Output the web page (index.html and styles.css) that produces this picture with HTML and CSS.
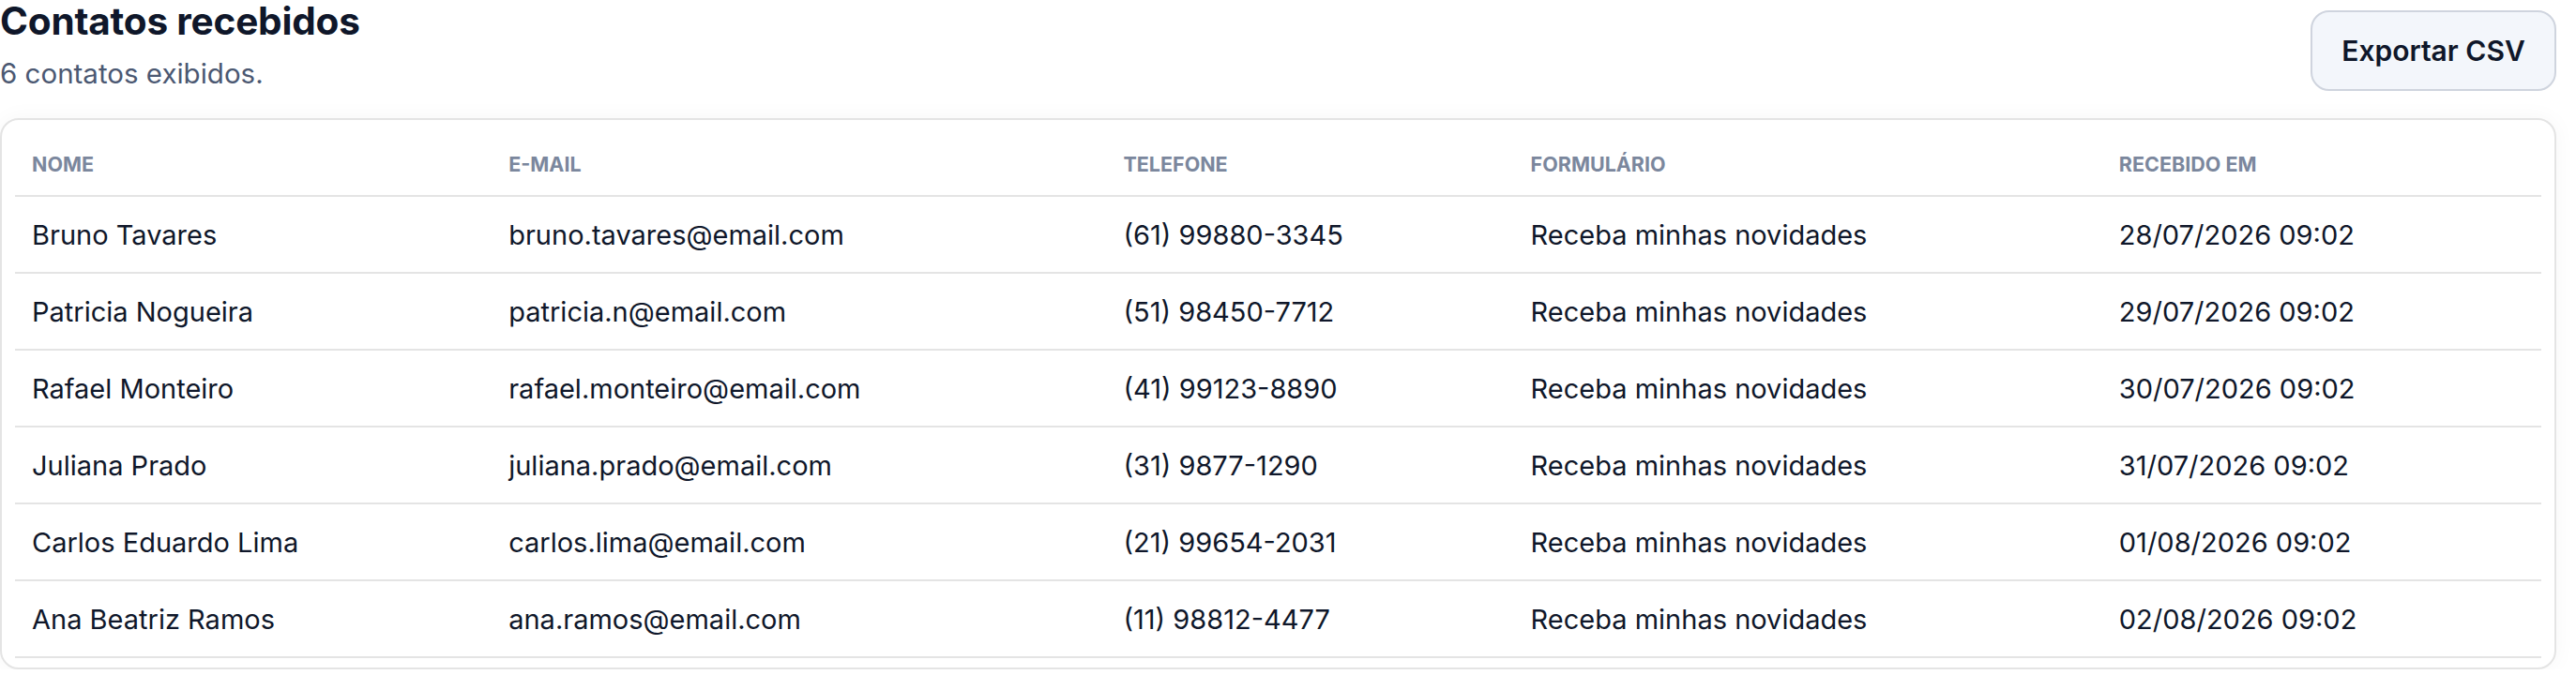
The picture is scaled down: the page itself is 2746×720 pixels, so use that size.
FILE: index.html
```html
<!DOCTYPE html>
<html lang="pt-BR">
<head>
<meta charset="utf-8">
<title>Contatos recebidos</title>
<link rel="stylesheet" href="styles.css">
</head>
<body>
<div class="page">
  <header class="page-header">
    <div class="heading">
      <h1 class="title">Contatos recebidos</h1>
      <p class="subtitle">6 contatos exibidos.</p>
    </div>
    <button class="btn-export" type="button">Exportar CSV</button>
  </header>

  <section class="card">
    <table class="contacts">
      <colgroup>
        <col class="col-name">
        <col class="col-email">
        <col class="col-phone">
        <col class="col-form">
        <col class="col-date">
      </colgroup>
      <thead>
        <tr>
          <th>Nome</th>
          <th>E-mail</th>
          <th>Telefone</th>
          <th>Formulário</th>
          <th>Recebido em</th>
        </tr>
      </thead>
      <tbody>
        <tr>
          <td>Bruno Tavares</td>
          <td>bruno.tavares@email.com</td>
          <td>(61) 99880-3345</td>
          <td>Receba minhas novidades</td>
          <td>28/07/2026 09:02</td>
        </tr>
        <tr>
          <td>Patricia Nogueira</td>
          <td>patricia.n@email.com</td>
          <td>(51) 98450-7712</td>
          <td>Receba minhas novidades</td>
          <td>29/07/2026 09:02</td>
        </tr>
        <tr>
          <td>Rafael Monteiro</td>
          <td>rafael.monteiro@email.com</td>
          <td>(41) 99123-8890</td>
          <td>Receba minhas novidades</td>
          <td>30/07/2026 09:02</td>
        </tr>
        <tr>
          <td>Juliana Prado</td>
          <td>juliana.prado@email.com</td>
          <td>(31) 9877-1290</td>
          <td>Receba minhas novidades</td>
          <td>31/07/2026 09:02</td>
        </tr>
        <tr>
          <td>Carlos Eduardo Lima</td>
          <td>carlos.lima@email.com</td>
          <td>(21) 99654-2031</td>
          <td>Receba minhas novidades</td>
          <td>01/08/2026 09:02</td>
        </tr>
        <tr>
          <td>Ana Beatriz Ramos</td>
          <td>ana.ramos@email.com</td>
          <td>(11) 98812-4477</td>
          <td>Receba minhas novidades</td>
          <td>02/08/2026 09:02</td>
        </tr>
      </tbody>
    </table>
  </section>
</div>
</body>
</html>
```

FILE: styles.css
```css
* {
  box-sizing: border-box;
}

html, body {
  margin: 0;
  padding: 0;
  background: #ffffff;
}

body {
  font-family: Inter, "DejaVu Sans", sans-serif;
  color: #0f172a;
}

.page {
  width: 2725px;
  display: flex;
  flex-direction: column;
  gap: 27px;
}

.page-header {
  display: flex;
  justify-content: space-between;
  align-items: flex-start;
}

.heading {
  display: flex;
  flex-direction: column;
  gap: 11px;
}

.title {
  margin: 0;
  font-size: 40.5px;
  line-height: 46px;
  font-weight: 700;
  color: #0f172a;
  letter-spacing: -0.2px;
}

.subtitle {
  margin: 0;
  font-size: 29.5px;
  line-height: 42px;
  font-weight: 400;
  color: #4b5872;
}

.btn-export {
  margin-top: 11px;
  width: 262px;
  height: 86px;
  border: 2px solid #cfd4de;
  border-radius: 20px;
  background: #f3f6fb;
  font-family: inherit;
  font-size: 30px;
  font-weight: 600;
  color: #0f172a;
  cursor: pointer;
}

.card {
  border: 2px solid #e4e4e4;
  border-radius: 20px;
  padding: 14px 14px 10px;
  background: #ffffff;
  box-shadow: 0 0 24px rgba(15, 23, 42, 0.04);
}

.contacts {
  width: 100%;
  table-layout: fixed;
  border-collapse: collapse;
}

.col-name { width: 508px; }
.col-email { width: 655px; }
.col-phone { width: 434px; }
.col-form { width: 627px; }
.col-date { width: 468px; }

.contacts th {
  height: 67px;
  padding: 0 18px;
  text-align: left;
  font-size: 21.5px;
  font-weight: 700;
  text-transform: uppercase;
  color: #7b879d;
  border-bottom: 2px solid #e4e4e4;
}

.contacts td {
  height: 82px;
  padding: 0 18px;
  font-size: 29px;
  font-weight: 400;
  color: #0f172a;
  border-bottom: 2px solid #e4e4e4;
  white-space: nowrap;
}
```
